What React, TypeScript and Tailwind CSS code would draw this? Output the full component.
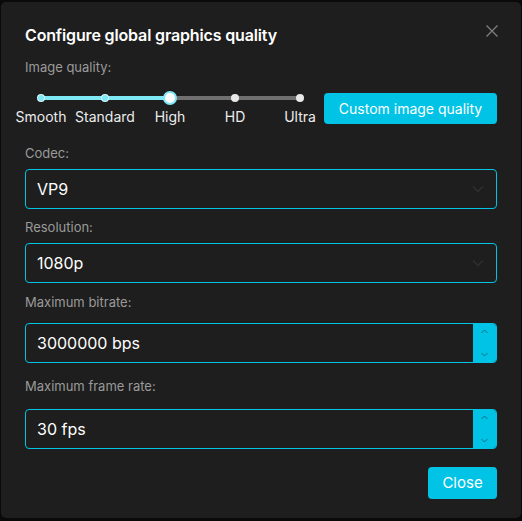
import React from 'react';

const LEVELS = [
  { name: 'Smooth', x: 16 },
  { name: 'Standard', x: 80 },
  { name: 'High', x: 145 },
  { name: 'HD', x: 210 },
  { name: 'Ultra', x: 275 },
];
const SELECTED = 2;

function QualitySlider() {
  const sel = LEVELS[SELECTED].x;
  return (
    <div className="relative w-[290px] h-[38px] shrink-0">
      {/* inactive track */}
      <div className="absolute top-[6px] h-[4px] bg-[#707070] rounded-full" style={{ left: 16, width: 259 }} />
      {/* active track */}
      <div className="absolute top-[6px] h-[4px] bg-[#7ee8f4] rounded-full" style={{ left: 16, width: sel - 16 }} />
      {LEVELS.map((l, i) => (
        <React.Fragment key={l.name}>
          {i === SELECTED ? (
            <div
              className="absolute top-[1px] w-[14px] h-[14px] rounded-full bg-white border-2 border-[#7ee8f4] -translate-x-1/2"
              style={{ left: l.x }}
            />
          ) : (
            <div
              className={
                'absolute top-[4px] w-[8px] h-[8px] rounded-full -translate-x-1/2 ' +
                (i < SELECTED ? 'bg-[#7ee8f4] border border-white/70' : 'bg-[#e8e8e8]')
              }
              style={{ left: l.x }}
            />
          )}
          <div
            className="absolute top-[17px] text-[14px] leading-[20px] text-[#ececec] -translate-x-1/2 whitespace-nowrap"
            style={{ left: l.x }}
          >
            {l.name}
          </div>
        </React.Fragment>
      ))}
    </div>
  );
}

function SelectBox({ value }: { value: string }) {
  return (
    <div className="h-[40px] w-full rounded-[4px] border border-[#00c3e6] flex items-center pl-[11px] pr-[12px]">
      <span className="text-[16px] text-white flex-1">{value}</span>
      <svg width="12" height="8" viewBox="0 0 12 8" fill="none">
        <path d="M1 1.5 L6 6.5 L11 1.5" stroke="#303030" strokeWidth="1.5" />
      </svg>
    </div>
  );
}

function NumberBox({ value }: { value: string }) {
  return (
    <div className="h-[40px] w-full rounded-[4px] border border-[#00c3e6] flex overflow-hidden">
      <div className="flex-1 flex items-center pl-[11px] text-[16px] text-white">{value}</div>
      <div className="w-[23px] bg-[#00c3e6] flex flex-col items-center justify-between py-[5px]">
        <svg width="7" height="5" viewBox="0 0 7 5" fill="none">
          <path d="M0.5 4 L3.5 1 L6.5 4" stroke="#0a6f82" strokeWidth="1" />
        </svg>
        <svg width="7" height="5" viewBox="0 0 7 5" fill="none">
          <path d="M0.5 1 L3.5 4 L6.5 1" stroke="#0a6f82" strokeWidth="1" />
        </svg>
      </div>
    </div>
  );
}

export default function App() {
  return (
    <div className="w-[522px] h-[521px] bg-[#0a0a0a] pt-[2px] px-[1px] pb-[3px]" style={{ fontFamily: 'Inter, "Noto Sans", sans-serif' }}>
      <div className="relative h-full bg-[#1e1e1e] rounded-[5px] px-6 pt-[21px] flex flex-col">
        <button className="absolute top-[21px] right-[21px] w-[16px] h-[16px] flex items-center justify-center">
          <svg width="14" height="14" viewBox="0 0 14 14" fill="none">
            <path d="M1.5 1.5 L12.5 12.5 M12.5 1.5 L1.5 12.5" stroke="#7c7c7c" strokeWidth="1.4" />
          </svg>
        </button>
        <h2 className="text-[16px] leading-[24px] font-semibold tracking-[-0.15px] text-white">Configure global graphics quality</h2>

        <div className="mt-[11px] text-[13px] leading-[18px] text-[#9a9a9a]">Image quality:</div>
        <div className="mt-[14px] flex items-start">
          <QualitySlider />
          <button className="ml-auto mt-[3px] w-[173px] h-[31px] rounded-[4px] bg-[#00c3e6] text-white text-[14px]">
            Custom image quality
          </button>
        </div>

        <div className="mt-[16px] text-[13px] leading-[18px] text-[#9a9a9a]">Codec:</div>
        <div className="mt-[7px]">
          <SelectBox value="VP9" />
        </div>

        <div className="mt-[9px] text-[13px] leading-[18px] text-[#9a9a9a]">Resolution:</div>
        <div className="mt-[7px]">
          <SelectBox value="1080p" />
        </div>

        <div className="mt-[10px] text-[13px] leading-[18px] text-[#9a9a9a]">Maximum bitrate:</div>
        <div className="mt-[12px]">
          <NumberBox value="3000000 bps" />
        </div>

        <div className="mt-[14px] text-[13px] leading-[18px] text-[#9a9a9a]">Maximum frame rate:</div>
        <div className="mt-[14px]">
          <NumberBox value="30 fps" />
        </div>

        <div className="mt-[18px] flex justify-end">
          <button className="w-[69px] h-[32px] rounded-[4px] bg-[#00c3e6] text-white text-[15px]">Close</button>
        </div>
      </div>
    </div>
  );
}
